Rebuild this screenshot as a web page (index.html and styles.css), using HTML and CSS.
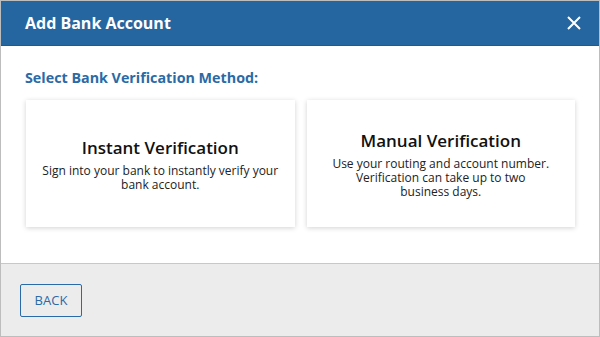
FILE: index.html
```html
<!DOCTYPE html>
<html lang="en">
<head>
  <meta charset="UTF-8">
  <title>Add Bank Account</title>
  <link rel="stylesheet" href="styles.css">
</head>
<body>
  <div class="dialog">
    <div class="dialog-header">
      <h1>Add Bank Account</h1>
      <button class="close" aria-label="Close">
        <svg width="14" height="14" viewBox="0 0 14 14">
          <path d="M1 1 L13 13 M13 1 L1 13" stroke="#fff" stroke-width="2" fill="none"/>
        </svg>
      </button>
    </div>

    <div class="dialog-body">
      <h2>Select Bank Verification Method:</h2>
      <div class="methods">
        <div class="method">
          <h3>Instant Verification</h3>
          <p>Sign into your bank to instantly verify your bank account.</p>
        </div>
        <div class="method">
          <h3>Manual Verification</h3>
          <p>Use your routing and account number.<br>Verification can take up to two<br>business days.</p>
        </div>
      </div>
    </div>

    <div class="dialog-footer">
      <a href="#" class="button">BACK</a>
    </div>
  </div>
</body>
</html>
```

FILE: styles.css
```css
body {
  font-family: 'Open Sans', sans-serif;
  margin: 0;
  padding: 0;
  color: #222;
}
.dialog {
  width: 600px;
  height: 337px;
  box-sizing: border-box;
  border: 1px solid #bdbdbd;
  display: flex;
  flex-direction: column;
  background-color: white;
}
.dialog-header {
  height: 44px;
  background-color: #2566a0;
  border-bottom: 1px solid #1d5a91;
  display: flex;
  align-items: center;
  justify-content: space-between;
  padding: 0 18px 0 24px;
}
.dialog-header h1 {
  margin: 0 0 1px 0;
  font-size: 16px;
  font-weight: 700;
  color: white;
}
.close {
  background: none;
  border: 0;
  padding: 0;
  margin-bottom: 1px;
  width: 14px;
  height: 14px;
  display: flex;
}
.dialog-body {
  flex: 1;
  padding: 22px 24px 0 24px;
}
.dialog-body h2 {
  margin: 0 0 13px 0;
  font-size: 14.3px;
  font-weight: 700;
  color: #2a6aa6;
}
.methods {
  display: grid;
  grid-template-columns: 1fr 1fr;
  gap: 12px;
  padding-left: 1px;
}
.method {
  height: 127px;
  background-color: white;
  box-shadow: 0 1px 5px rgba(0, 0, 0, 0.18);
  display: flex;
  flex-direction: column;
  align-items: center;
  justify-content: center;
  text-align: center;
  padding: 0 14px;
}
.method h3 {
  margin: 0 0 5px 0;
  font-size: 17px;
  font-weight: 600;
  color: #111;
}
.method p {
  margin: 0;
  font-size: 12px;
  line-height: 14px;
  color: #222;
}
.dialog-footer {
  height: 73px;
  background-color: #ececec;
  border-top: 1px solid #c8c8c8;
  padding: 20px 19px;
  box-sizing: border-box;
}
.button {
  display: inline-block;
  box-sizing: border-box;
  width: 62px;
  height: 33px;
  line-height: 31px;
  text-align: center;
  border: 1px solid #2a6aa6;
  border-radius: 2px;
  color: #2a6aa6;
  font-size: 13px;
  text-decoration: none;
}
```
